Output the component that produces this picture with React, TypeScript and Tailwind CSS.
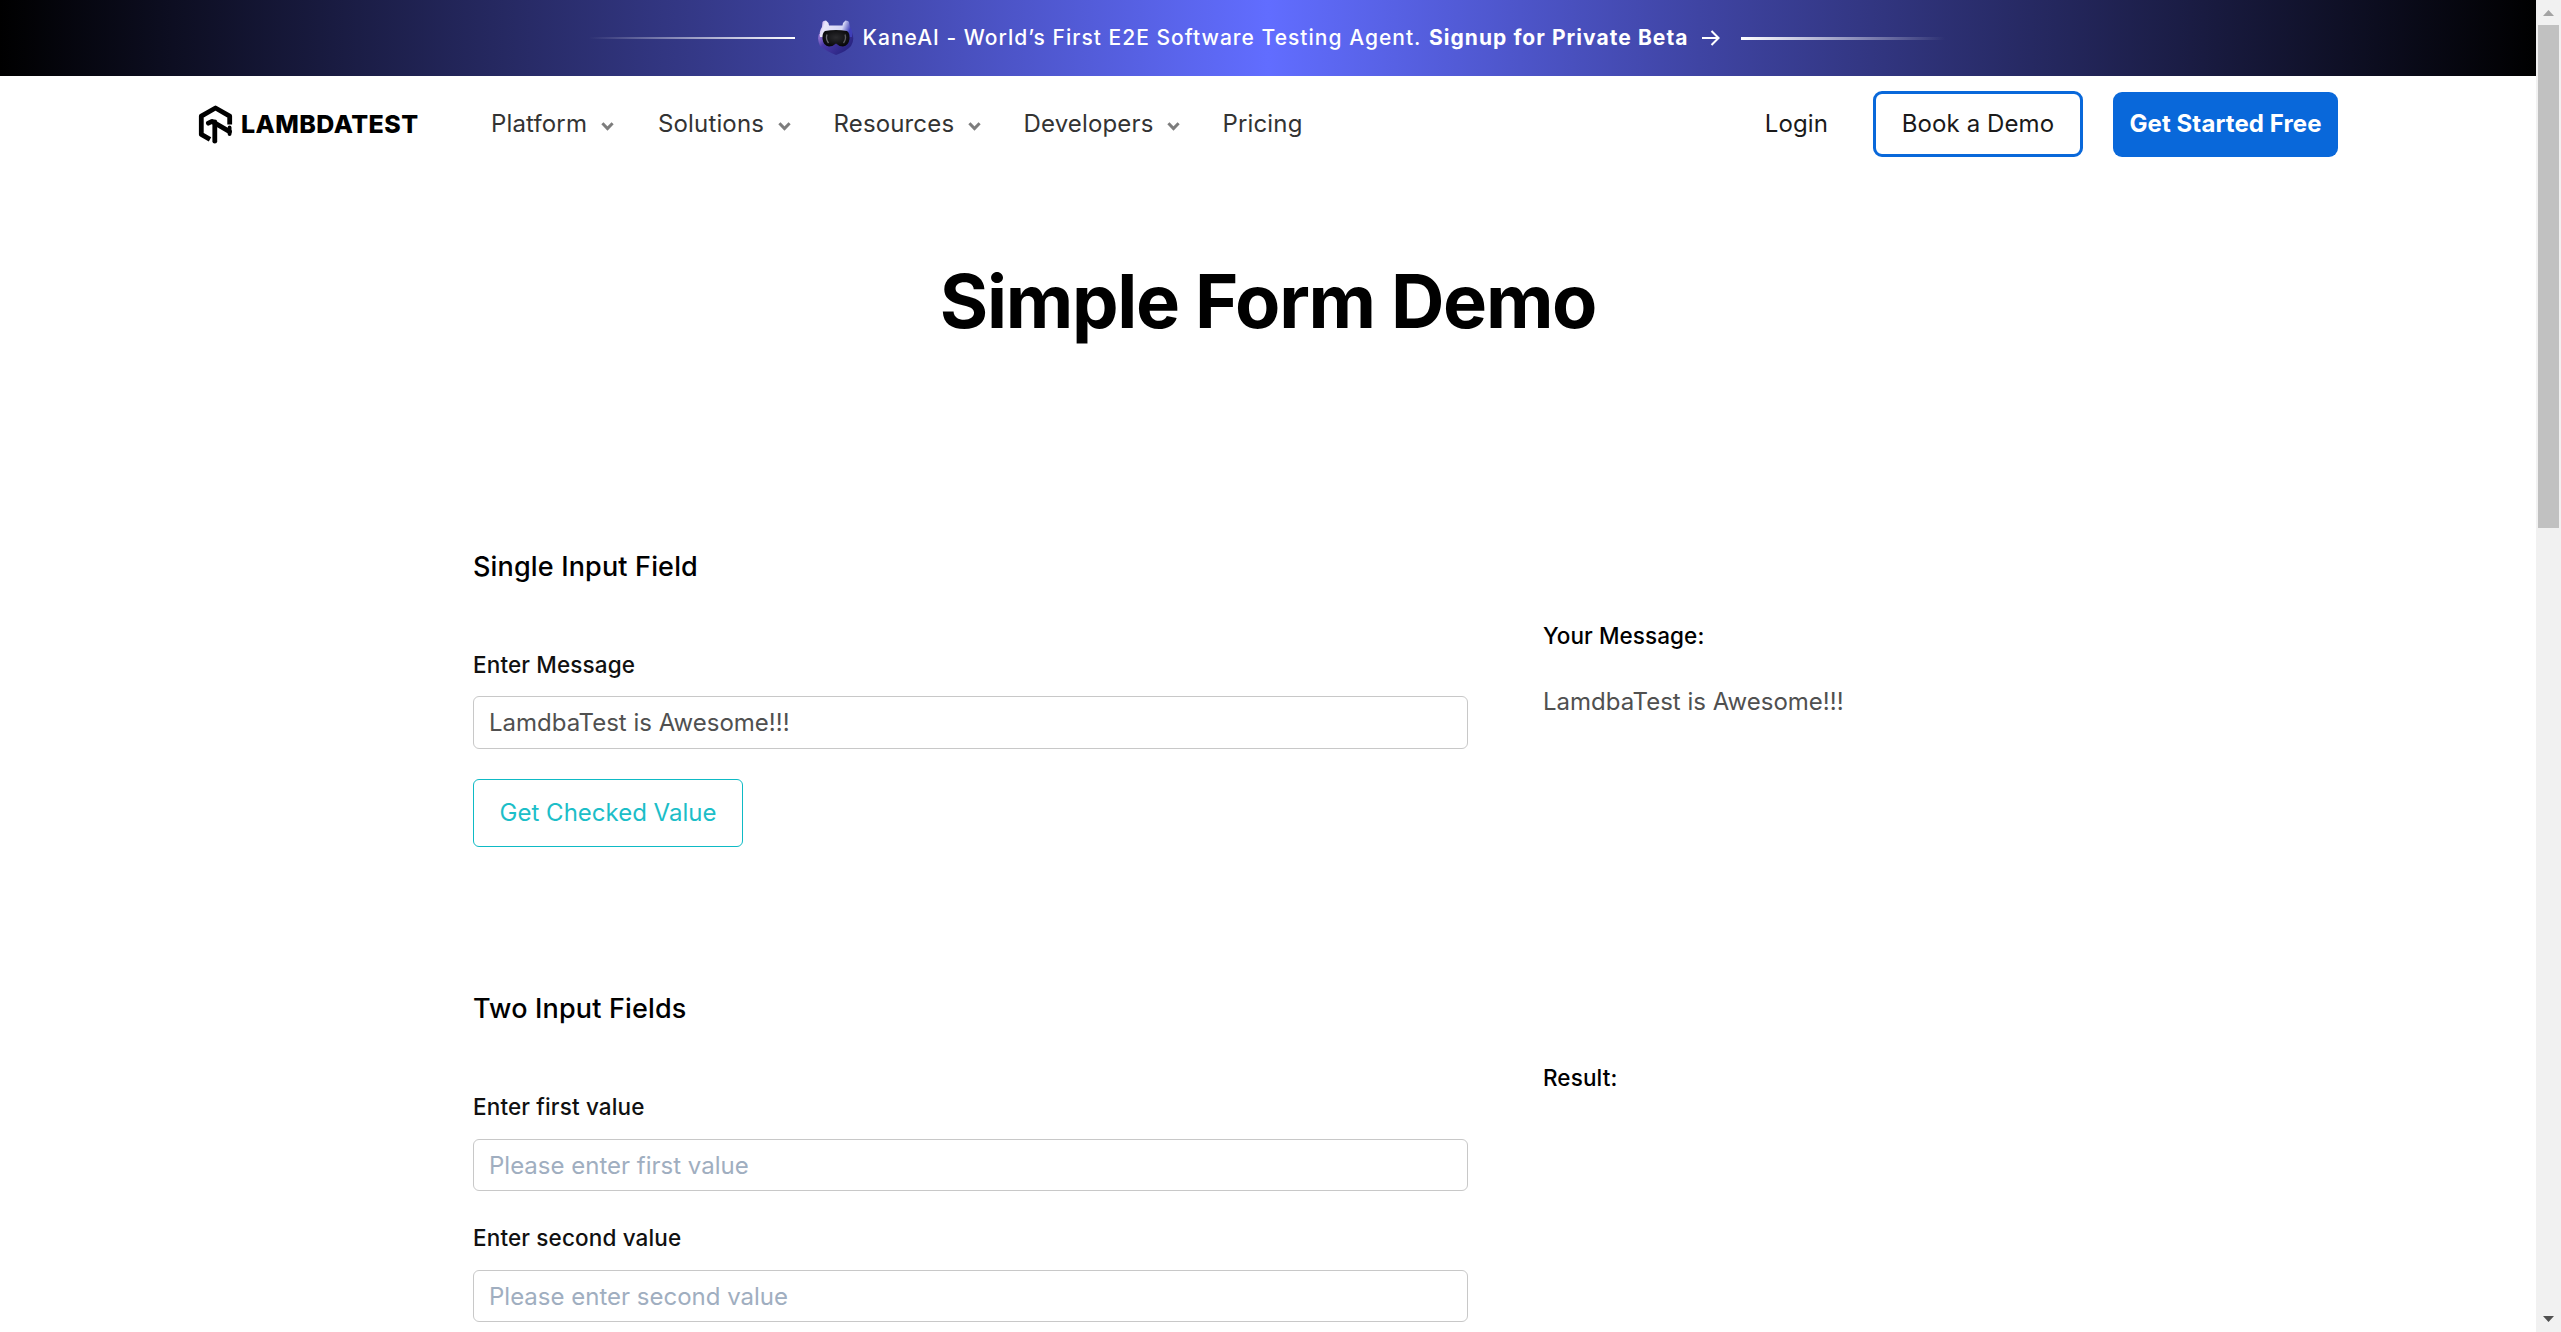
function Chevron() {
  return (
    <svg className="mt-[5px] h-[9px] w-[13px]" viewBox="0 0 13 9" fill="none">
      <path d="M1.4 1.3 L6.5 6.6 L11.6 1.3" stroke="#7d7d7d" strokeWidth="3" />
    </svg>
  );
}

function HexLogo() {
  return (
    <svg className="h-[39px] w-[35px]" viewBox="0 0 35 39" fill="none" stroke="#000" strokeWidth="4.8">
      <path d="M12 34.4 L3.3 29.4 V11.2 L17.5 3 L31.7 11.2 V19.6" strokeLinejoin="round" />
      <path d="M10.4 18.2 L14 16.4 L31.6 26.6" strokeLinejoin="round" strokeLinecap="round" />
      <path d="M31.6 22.5 V29" strokeWidth="3.8" strokeLinecap="round" />
      <path d="M16.8 17 V36.2" strokeLinecap="round" />
    </svg>
  );
}

function Robot() {
  return (
    <svg className="h-[36px] w-[36px]" viewBox="0 0 36 36">
      <defs>
        <linearGradient id="shell" x1="0" y1="0" x2="1" y2="0.2">
          <stop offset="0" stopColor="#b48be8" />
          <stop offset="0.2" stopColor="#e9e6fa" />
          <stop offset="0.75" stopColor="#d3d4f4" />
          <stop offset="1" stopColor="#3f3fb8" />
        </linearGradient>
        <linearGradient id="chin" x1="0" y1="0" x2="1" y2="0.6">
          <stop offset="0" stopColor="#b690e6" />
          <stop offset="0.35" stopColor="#4a3aa6" />
          <stop offset="1" stopColor="#25227e" />
        </linearGradient>
        <radialGradient id="visor" cx="0.5" cy="0.45" r="0.6">
          <stop offset="0" stopColor="#2a2a2d" />
          <stop offset="1" stopColor="#060608" />
        </radialGradient>
      </defs>
      <path d="M1 14 Q-1 20 2 26 Q8 31 18 35 Q29 31 33 26 Q37 20 34 12 Z" fill="url(#chin)" />
      <path
        d="M2 17 Q1 11 4 7 L4.5 2 Q5 0.5 8 0.5 Q10.5 2 11 5.5 H24.5 Q25 2 27.5 0.5 Q30.5 0.5 31 2 L32 7 Q35 11 34 17 Z"
        fill="url(#shell)"
      />
      <path
        d="M7 11 Q18 9 29 11 Q32 13 31.5 19 Q30.5 26 25 26.5 Q21 26.5 18 23.5 Q15 26.5 11 26.5 Q5.5 26 4.5 19 Q4 13 7 11 Z"
        fill="url(#visor)"
      />
      <path d="M9 14.5 Q7.5 19 10.5 23" stroke="#6f6f76" strokeWidth="1.3" fill="none" />
      <path d="M27 14.5 Q28.5 19 25.5 23" stroke="#5c5c62" strokeWidth="1.3" fill="none" />
    </svg>
  );
}

function Banner() {
  return (
    <div className="flex h-[76px] items-center bg-[linear-gradient(90deg,#000_0%,#3f44a3_33%,#616dff_50%,#3f44a3_67%,#000_100%)] pl-[589px] text-[21px] leading-[32px] tracking-[1px] text-white">
      <div className="h-[2px] w-[206px] bg-linear-to-r from-white/0 to-white" />
      <div className="ml-[23px]">
        <Robot />
      </div>
      <p className="ml-[8.5px] w-[566.5px] whitespace-nowrap font-medium tracking-[1.02px]">
        KaneAI - World’s First E2E Software Testing Agent.
      </p>
      <p className="w-[273px] whitespace-nowrap font-bold tracking-[1.05px]">Signup for Private Beta</p>
      <svg className="h-[16px] w-[18px]" viewBox="0 0 18 16" fill="none" stroke="#fff" strokeWidth="2.1">
        <path d="M0 8 H16.5 M9.5 1 L16.5 8 L9.5 15" />
      </svg>
      <div className="ml-[21px] h-[3px] w-[204px] bg-linear-to-r from-white to-white/0" />
    </div>
  );
}

const NAV = [
  { label: "Platform", width: "w-[167px]", menu: true },
  { label: "Solutions", width: "w-[175.5px]", menu: true },
  { label: "Resources", width: "w-[190px]", menu: true },
  { label: "Developers", width: "w-[199px]", menu: true },
  { label: "Pricing", width: "w-[90px]", menu: false },
];

function Header() {
  return (
    <header className="flex h-[96px] items-center pl-[198px] pr-[198px] text-[24px] leading-[36px]">
      <div className="flex w-[293px] items-center">
        <HexLogo />
        <span className="ml-[8px] text-[25px] font-extrabold tracking-[0.45px] text-black">LAMBDATEST</span>
      </div>
      <nav className="flex tracking-[0.15px] text-[#333]">
        {NAV.map((n) => (
          <a key={n.label} className={`flex items-center gap-[14px] ${n.width}`}>
            {n.label}
            {n.menu && <Chevron />}
          </a>
        ))}
      </nav>
      <div className="ml-auto flex items-center tracking-[0.1px] text-[#1a1a1a]">
        <a className="mr-[45px]">Login</a>
        <a className="flex h-[66px] w-[210px] items-center justify-center rounded-[9px] border-[3px] border-[#0968da]">
          Book a Demo
        </a>
        <a className="ml-[30px] mt-[1px] flex h-[65px] w-[225px] items-center justify-center rounded-[9px] bg-[#0968da] pb-[2px] font-bold text-white">
          Get Started Free
        </a>
      </div>
    </header>
  );
}

function Field({ label, children }: { label: string; children: React.ReactNode }) {
  return (
    <div className="flex flex-col">
      <label className="text-[22.5px] font-medium leading-[36px] tracking-[0.14px] text-[#111]">{label}</label>
      {children}
    </div>
  );
}

const INPUT =
  "w-[995px] rounded-[6px] border border-[#c8c8c8] bg-white px-[15px] text-[24px] text-[#505050] outline-none placeholder:text-[#a0aec0] placeholder:opacity-100";

function Scrollbar() {
  return (
    <div className="flex w-[25px] shrink-0 flex-col items-center bg-[#f1f1f1]">
      <svg className="h-[25px] w-[25px]" viewBox="0 0 25 25">
        <path d="M7 16 L12.5 10 L18 16 Z" fill="#a3a3a3" />
      </svg>
      <div className="h-[503px] w-[21px] bg-[#c1c1c1]" />
      <svg className="mt-auto h-[25px] w-[25px]" viewBox="0 0 25 25">
        <path d="M7 9 L12.5 15 L18 9 Z" fill="#505050" />
      </svg>
    </div>
  );
}

export default function App() {
  return (
    <div className="flex h-[1332px] w-[2561px] overflow-hidden bg-white font-['Inter',sans-serif]">
      <div className="w-[2536px]">
        <Banner />
        <Header />
        <h1 className="mt-[84px] text-center text-[74px] font-bold leading-[90px] tracking-[-1.3px] text-black">
          Simple Form Demo
        </h1>

        <section className="mt-[203px] flex h-[442px] pl-[473px]">
          <div className="w-[1070px]">
            <h2 className="text-[27px] font-medium leading-[36px] tracking-[0.16px] text-black">Single Input Field</h2>
            <div className="mt-[62px]">
              <Field label="Enter Message">
                <input className={`mt-[13px] h-[53px] ${INPUT}`} defaultValue="LamdbaTest is Awesome!!!" />
              </Field>
            </div>
            <button className="mt-[30px] h-[68px] w-[270px] rounded-[6px] border border-[#0ebac5] text-[24px] text-[#1cbec8]">
              Get Checked Value
            </button>
          </div>
          <div className="pt-[69px] leading-[36px]">
            <p className="text-[22.5px] font-medium tracking-[0.08px] text-black">Your Message:</p>
            <p className="mt-[30px] text-[24px] text-[#505050]">LamdbaTest is Awesome!!!</p>
          </div>
        </section>

        <section className="flex pl-[473px]">
          <div className="w-[1070px]">
            <h2 className="text-[27px] font-medium leading-[36px] tracking-[0.16px] text-black">Two Input Fields</h2>
            <div className="mt-[62px]">
              <Field label="Enter first value">
                <input className={`mt-[14px] h-[52px] ${INPUT}`} placeholder="Please enter first value" />
              </Field>
            </div>
            <div className="mt-[29px]">
              <Field label="Enter second value">
                <input className={`mt-[14px] h-[52px] ${INPUT}`} placeholder="Please enter second value" />
              </Field>
            </div>
          </div>
          <p className="pt-[69px] text-[22.5px] font-medium leading-[36px] tracking-[0.1px] text-black">Result:</p>
        </section>
      </div>
      <Scrollbar />
    </div>
  );
}
